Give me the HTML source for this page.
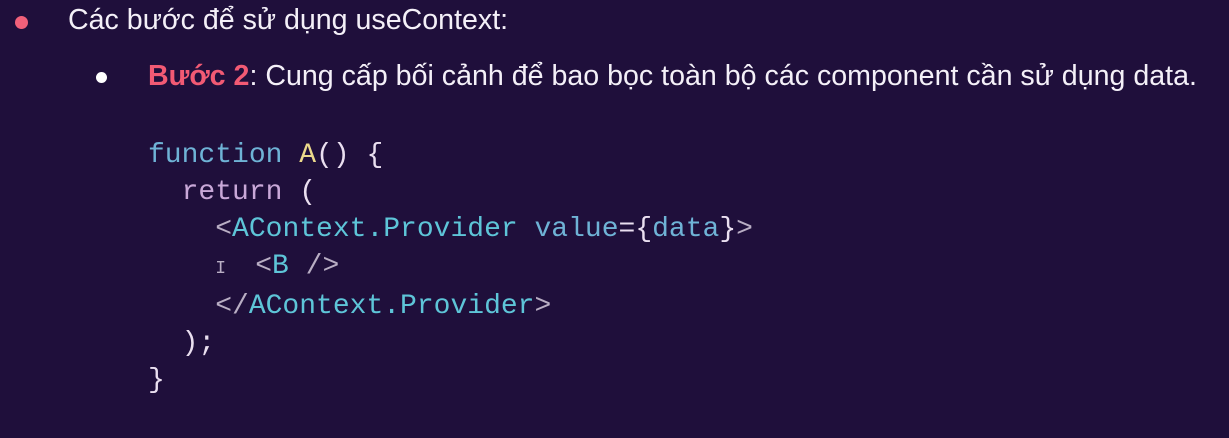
<!DOCTYPE html>
<html><head><meta charset="utf-8"><style>
body{margin:0;width:1229px;height:438px;background:#1f0f3b;overflow:hidden;position:relative;font-family:"Liberation Sans",sans-serif;color:#f4f0f8}
.t{position:absolute;white-space:nowrap}
.dot{position:absolute;border-radius:50%}
.code{position:absolute;left:148px;font-family:"Liberation Mono",monospace;font-size:28px;white-space:pre;line-height:37px;top:137px;color:#d8cbe0}
.k{color:#6fb3d6}.y{color:#ecd98b}.c{color:#5ec5d8}.g{color:#b9aec4}.w{color:#eadff0}
</style></head><body>
<div class="dot" style="left:15px;top:16px;width:13px;height:13px;background:#f0607a"></div>
<div class="t" style="left:68px;top:4px;font-size:28.6px">Các bước để sử dụng useContext:</div>
<div class="dot" style="left:96px;top:72px;width:11px;height:11px;background:#fff"></div>
<div class="t" style="left:148px;top:60px;font-size:28.6px"><b style="color:#f25a74">Bước 2</b>: Cung cấp bối cảnh để bao bọc toàn bộ các component cần sử dụng data.</div>
<div class="code"><span class="k">function</span> <span class="y">A</span><span class="w">() {</span>
  <span style="color:#c9a8d8">return</span> <span class="w">(</span>
    <span class="g">&lt;</span><span class="c">AContext.Provider</span> <span class="k">value</span><span class="w">={</span><span class="k">data</span><span class="w">}</span><span class="g">&gt;</span>
    <span class="g" style="display:inline-block;width:40px;font-size:18px">I</span><span class="g">&lt;</span><span class="c">B</span> <span class="g">/&gt;</span>
    <span class="g">&lt;/</span><span class="c">AContext.Provider</span><span class="g">&gt;</span>
  <span class="w">);</span>
<span class="w">}</span></div>
</body></html>
